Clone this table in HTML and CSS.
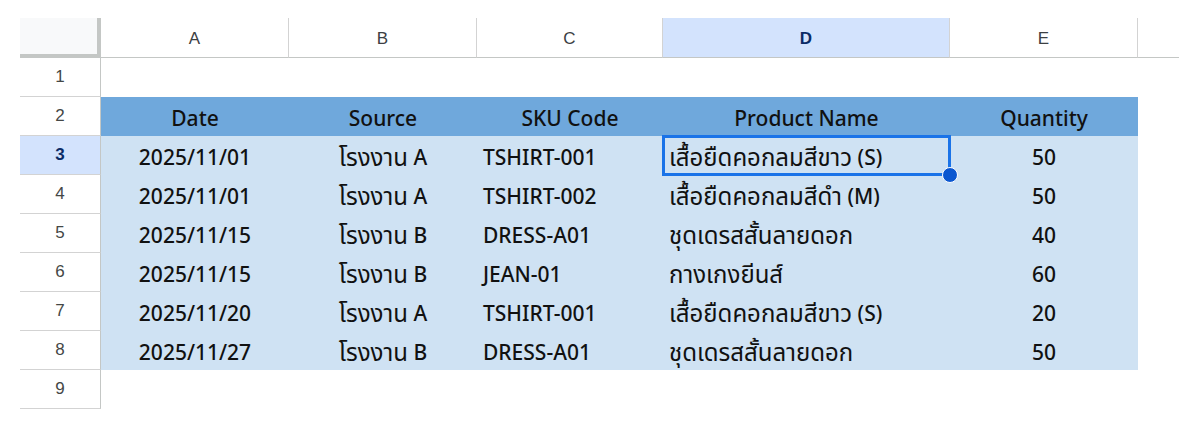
FILE: index.html
```html
<!DOCTYPE html>
<html lang="th">
<head>
<meta charset="utf-8">
<title>Sheet</title>
<link rel="stylesheet" href="styles.css">
</head>
<body>
<div class="sheet">
  <div class="row colhead">
    <div class="corner"></div>
    <div class="ch">A</div>
    <div class="ch">B</div>
    <div class="ch">C</div>
    <div class="ch sel">D</div>
    <div class="ch">E</div>
    <div class="ch tail"></div>
  </div>
  <div class="row"><div class="rh">1</div></div>
  <div class="row head">
    <div class="rh">2</div>
    <div class="c ctr">Date</div><div class="c ctr">Source</div><div class="c ctr">SKU Code</div><div class="c ctr">Product Name</div><div class="c ctr">Quantity</div>
  </div>
  <div class="row data">
    <div class="rh sel">3</div>
    <div class="c ctr">2025/11/01</div><div class="c ctr"><span class="th">โรงงาน</span>&nbsp;A</div><div class="c">TSHIRT-001</div><div class="c active"><span class="th">เสื้อยืดคอกลมสีขาว</span>&nbsp;(S)<span class="handle"></span></div><div class="c ctr">50</div>
  </div>
  <div class="row data">
    <div class="rh">4</div>
    <div class="c ctr">2025/11/01</div><div class="c ctr"><span class="th">โรงงาน</span>&nbsp;A</div><div class="c">TSHIRT-002</div><div class="c"><span class="th">เสื้อยืดคอกลมสีดำ</span>&nbsp;(M)</div><div class="c ctr">50</div>
  </div>
  <div class="row data">
    <div class="rh">5</div>
    <div class="c ctr">2025/11/15</div><div class="c ctr"><span class="th">โรงงาน</span>&nbsp;B</div><div class="c">DRESS-A01</div><div class="c"><span class="th">ชุดเดรสสั้นลายดอก</span></div><div class="c ctr">40</div>
  </div>
  <div class="row data">
    <div class="rh">6</div>
    <div class="c ctr">2025/11/15</div><div class="c ctr"><span class="th">โรงงาน</span>&nbsp;B</div><div class="c">JEAN-01</div><div class="c"><span class="th">กางเกงยีนส์</span></div><div class="c ctr">60</div>
  </div>
  <div class="row data">
    <div class="rh">7</div>
    <div class="c ctr">2025/11/20</div><div class="c ctr"><span class="th">โรงงาน</span>&nbsp;A</div><div class="c">TSHIRT-001</div><div class="c"><span class="th">เสื้อยืดคอกลมสีขาว</span>&nbsp;(S)</div><div class="c ctr">20</div>
  </div>
  <div class="row data">
    <div class="rh">8</div>
    <div class="c ctr">2025/11/27</div><div class="c ctr"><span class="th">โรงงาน</span>&nbsp;B</div><div class="c">DRESS-A01</div><div class="c"><span class="th">ชุดเดรสสั้นลายดอก</span></div><div class="c ctr">50</div>
  </div>
  <div class="row"><div class="rh">9</div></div>
</div>
</body>
</html>
```
FILE: styles.css
```css
html, body {
  margin: 0;
  padding: 0;
  background: #ffffff;
}
.sheet {
  padding: 18px 0 0 20px;
  font-family: "Noto Sans", "Noto Sans Thai", "Noto Sans CJK SC", sans-serif;
  color: #000;
}
.row {
  display: grid;
  grid-template-columns: 81px 188px 188px 186px 287px 188px 41px;
  height: 39px;
}
.colhead {
  height: 40px;
}
.corner {
  background: #f8f9fa;
  border-right: 4px solid #c4c7c5;
  border-bottom: 4px solid #c4c7c5;
  box-sizing: border-box;
  height: 40px;
}
.ch {
  font-family: "Liberation Sans", Arial, sans-serif;
  font-size: 17px;
  color: #3c4043;
  display: flex;
  align-items: center;
  justify-content: center;
  border-right: 1px solid #d3d3d3;
  border-bottom: 1px solid #c4c7c5;
  box-sizing: border-box;
  padding-top: 3px;
}
.ch.sel {
  background: #d3e3fd;
  color: #0b2b66;
  font-weight: bold;
}
.ch.tail {
  border-right: none;
}
.rh {
  font-family: "Liberation Sans", Arial, sans-serif;
  font-size: 17px;
  color: #444746;
  display: flex;
  align-items: center;
  justify-content: center;
  border-right: 1px solid #c4c7c5;
  border-bottom: 1px solid #d3d3d3;
  box-sizing: border-box;
  height: 39px;
}
.rh.sel {
  background: #d3e3fd;
  color: #0b2b66;
  font-weight: bold;
}
.c {
  font-size: 21px;
  font-weight: 500;
  display: flex;
  align-items: center;
  padding: 2px 6px 0;
  white-space: nowrap;
  position: relative;
  color: #111;
}
.th {
  font-size: 24px;
  font-weight: 400;
  line-height: 1;
}
.c.ctr {
  justify-content: center;
}
.head .c {
  background: #6fa8dc;
}
.data .c {
  background: #cfe2f3;
}
.active {
  outline: 3px solid #1a73e8;
  outline-offset: -2px;
  z-index: 2;
}
.handle {
  position: absolute;
  right: -8px;
  bottom: -8px;
  width: 14px;
  height: 14px;
  border-radius: 50%;
  background: #0b57d0;
  border: 1.5px solid #ffffff;
}
```
